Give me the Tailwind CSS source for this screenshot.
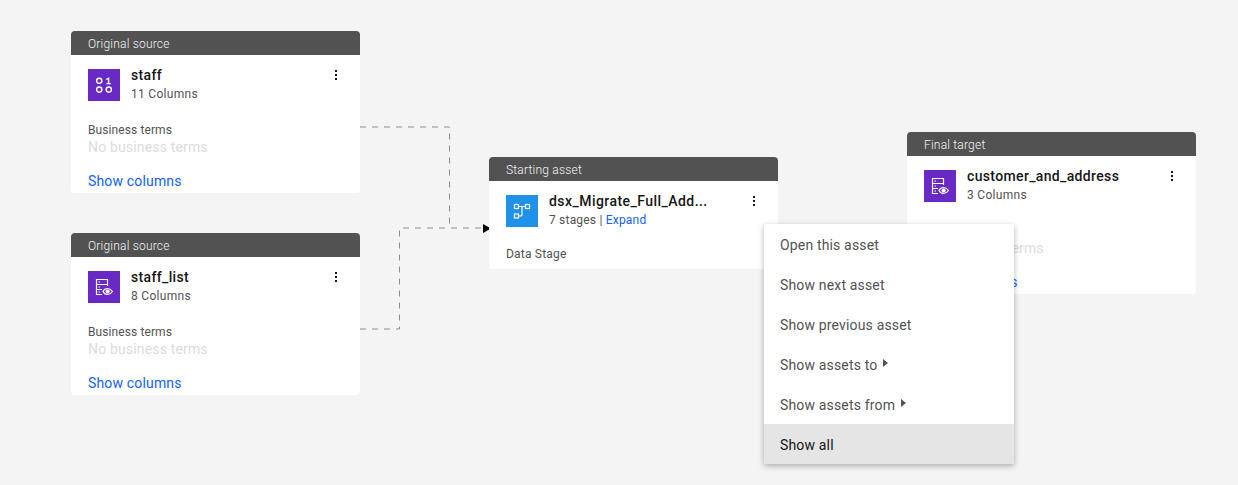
<!DOCTYPE html>
<html lang="en">
<head>
  <meta charset="UTF-8" />
  <title>Lineage</title>
  <script src="https://cdn.jsdelivr.net/npm/@tailwindcss/browser@4"></script>
</head>
<body class="bg-[#f4f4f4] font-['Roboto',sans-serif] overflow-hidden">
<div class="relative w-[1238px] h-[485px] overflow-hidden">

  <!-- Edges -->
  <svg class="absolute left-0 top-0" width="1238" height="485" fill="none">
    <path d="M360 127H449.5V228" stroke="#8d8d8d" stroke-dasharray="6 6"/>
    <path d="M360 329H399.5V228H484" stroke="#8d8d8d" stroke-dasharray="6 6"/>
    <path d="M483 224L491 228.5L483 233Z" fill="#000"/>
  </svg>

  <!-- staff -->
  <div class="absolute left-[71px] top-[31px] w-[289px] h-[162px] bg-white rounded-[4px] overflow-hidden">
    <div class="h-6 bg-[#525252] text-[#f4f4f4] text-[12px] tracking-[0.2px] leading-[26px] pl-[17px] font-light">Original source</div>
    <div class="flex pl-[17px] pt-[14px]">
      <div class="w-8 h-8 bg-[#6929c4] flex items-center justify-center">
        <svg width="20" height="20" viewBox="0 0 20 20" fill="none" stroke="#fff" stroke-width="1.4">
          <circle cx="5.2" cy="5.8" r="2.6"/><path d="M12.2 4.4L14.6 3.4V8.6M12.4 8.6H16.8"/>
          <circle cx="5.2" cy="14.6" r="2.6"/><circle cx="14.8" cy="14.6" r="2.6"/>
        </svg>
      </div>
      <div class="ml-[11px] flex-1">
        <div class="text-[14px] font-medium leading-[14px] mt-[-1px] tracking-[0.35px] text-[#161616]">staff</div>
        <div class="text-[12px] leading-4 mt-[4px] text-[#525252] tracking-[0.3px]">11 Columns</div>
      </div>
      <svg class="mr-[16px] mt-[-2px]" width="16" height="16" viewBox="0 0 16 16" fill="#161616"><rect x="7" y="3" width="2" height="2"/><rect x="7" y="7" width="2" height="2"/><rect x="7" y="11" width="2" height="2"/></svg>
    </div>
    <div class="pl-[17px] mt-[20px]">
      <div class="text-[12px] leading-4 text-[#525252] tracking-[0.1px]">Business terms</div>
      <div class="text-[14px] leading-[18px] text-[#dcdcdc] tracking-[0.16px]">No business terms</div>
      <div class="text-[14px] leading-[18px] text-[#0f62fe] tracking-[0.16px] mt-[16px]">Show columns</div>
    </div>
  </div>

  <!-- staff_list -->
  <div class="absolute left-[71px] top-[233px] w-[289px] h-[162px] bg-white rounded-[4px] overflow-hidden">
    <div class="h-6 bg-[#525252] text-[#f4f4f4] text-[12px] tracking-[0.2px] leading-[26px] pl-[17px] font-light">Original source</div>
    <div class="flex pl-[17px] pt-[14px]">
      <div class="w-8 h-8 bg-[#6929c4] flex items-center justify-center">
        <svg width="20" height="20" viewBox="0 0 20 20" fill="none" stroke="#fff" stroke-width="1.2">
          <path d="M8 17.5H2.5V2.5H13.5V9M2.5 7.5H13.5M2.5 12.5H8"/>
          <path d="M4.5 5H6M4.5 10H6M4.5 15H6"/>
          <path d="M9 14.5C10 12.5 11.6 11.5 13.5 11.5C15.4 11.5 17 12.5 18.5 14.5C17 16.5 15.4 17.5 13.5 17.5C11.6 17.5 10 16.5 9 14.5Z"/>
          <circle cx="13.6" cy="14.5" r="1.5" fill="#fff"/>
        </svg>
      </div>
      <div class="ml-[11px] flex-1">
        <div class="text-[14px] font-medium leading-[14px] mt-[-1px] tracking-[0.35px] text-[#161616]">staff_list</div>
        <div class="text-[12px] leading-4 mt-[4px] text-[#525252] tracking-[0.3px]">8 Columns</div>
      </div>
      <svg class="mr-[16px] mt-[-2px]" width="16" height="16" viewBox="0 0 16 16" fill="#161616"><rect x="7" y="3" width="2" height="2"/><rect x="7" y="7" width="2" height="2"/><rect x="7" y="11" width="2" height="2"/></svg>
    </div>
    <div class="pl-[17px] mt-[20px]">
      <div class="text-[12px] leading-4 text-[#525252] tracking-[0.1px]">Business terms</div>
      <div class="text-[14px] leading-[18px] text-[#dcdcdc] tracking-[0.16px]">No business terms</div>
      <div class="text-[14px] leading-[18px] text-[#0f62fe] tracking-[0.16px] mt-[16px]">Show columns</div>
    </div>
  </div>

  <!-- starting asset -->
  <div class="absolute left-[489px] top-[157px] w-[289px] h-[112px] bg-white rounded-[4px] overflow-hidden">
    <div class="h-6 bg-[#525252] text-[#f4f4f4] text-[12px] tracking-[0.2px] leading-[26px] pl-[17px] font-light">Starting asset</div>
    <div class="flex pl-[17px] pt-[14px]">
      <div class="w-8 h-8 bg-[#1f91e8] flex items-center justify-center">
        <svg width="20" height="20" viewBox="0 0 20 20" fill="none" stroke="#fff" stroke-width="1.2">
          <rect x="2.5" y="3.5" width="4" height="4"/><rect x="13.5" y="3.5" width="4" height="4"/><rect x="2.5" y="13" width="4" height="4"/>
          <path d="M6.5 5.5H13.5M10 5.5V13C10 14.2 9.4 15 8.2 15H6.5"/>
        </svg>
      </div>
      <div class="ml-[11px] flex-1">
        <div class="text-[14px] font-medium leading-[14px] mt-[-1px] tracking-[0.45px] text-[#161616]">dsx_Migrate_Full_Add...</div>
        <div class="text-[12px] leading-4 mt-[4px] text-[#525252] tracking-[0.2px]">7 stages | <span class="text-[#0f62fe]">Expand</span></div>
      </div>
      <svg class="mr-[16px] mt-[-2px]" width="16" height="16" viewBox="0 0 16 16" fill="#161616"><rect x="7" y="3" width="2" height="2"/><rect x="7" y="7" width="2" height="2"/><rect x="7" y="11" width="2" height="2"/></svg>
    </div>
    <div class="pl-[17px] mt-[18px] text-[12px] leading-4 text-[#525252] tracking-[0.2px]">Data Stage</div>
  </div>

  <!-- final target -->
  <div class="absolute left-[907px] top-[132px] w-[289px] h-[162px] bg-white rounded-[4px] overflow-hidden">
    <div class="h-6 bg-[#525252] text-[#f4f4f4] text-[12px] tracking-[0.2px] leading-[26px] pl-[17px] font-light">Final target</div>
    <div class="flex pl-[17px] pt-[14px]">
      <div class="w-8 h-8 bg-[#6929c4] flex items-center justify-center">
        <svg width="20" height="20" viewBox="0 0 20 20" fill="none" stroke="#fff" stroke-width="1.2">
          <path d="M8 17.5H2.5V2.5H13.5V9M2.5 7.5H13.5M2.5 12.5H8"/>
          <path d="M4.5 5H6M4.5 10H6M4.5 15H6"/>
          <path d="M9 14.5C10 12.5 11.6 11.5 13.5 11.5C15.4 11.5 17 12.5 18.5 14.5C17 16.5 15.4 17.5 13.5 17.5C11.6 17.5 10 16.5 9 14.5Z"/>
          <circle cx="13.6" cy="14.5" r="1.5" fill="#fff"/>
        </svg>
      </div>
      <div class="ml-[11px] flex-1">
        <div class="text-[14px] font-medium leading-[14px] mt-[-1px] tracking-[0.35px] text-[#161616]">customer_and_address</div>
        <div class="text-[12px] leading-4 mt-[4px] text-[#525252] tracking-[0.3px]">3 Columns</div>
      </div>
      <svg class="mr-[16px] mt-[-2px]" width="16" height="16" viewBox="0 0 16 16" fill="#161616"><rect x="7" y="3" width="2" height="2"/><rect x="7" y="7" width="2" height="2"/><rect x="7" y="11" width="2" height="2"/></svg>
    </div>
    <div class="pl-[17px] mt-[20px]">
      <div class="text-[12px] leading-4 text-[#525252] tracking-[0.1px]">Business terms</div>
      <div class="text-[14px] leading-[18px] text-[#dcdcdc] tracking-[0.16px]">No business terms</div>
      <div class="text-[14px] leading-[18px] text-[#0f62fe] tracking-[0.16px] mt-[16px]">Show columns</div>
    </div>
  </div>

  <!-- Context menu -->
  <ul class="absolute left-[764px] top-[224px] w-[250px] bg-white shadow-[0_2px_6px_rgba(0,0,0,0.3)] text-[14px] text-[#525252] tracking-[0.16px]">
    <li class="h-10 flex items-center pl-4 pt-[2px]">Open this asset</li>
    <li class="h-10 flex items-center pl-4 pt-[2px]">Show next asset</li>
    <li class="h-10 flex items-center pl-4 pt-[2px]">Show previous asset</li>
    <li class="h-10 flex items-center pl-4 pt-[2px]">Show assets to
      <svg class="ml-[6px] mt-[-4px]" width="5" height="8" viewBox="0 0 5 8" fill="#525252"><path d="M0 0L5 4L0 8Z"/></svg>
    </li>
    <li class="h-10 flex items-center pl-4 pt-[2px]">Show assets from
      <svg class="ml-[6px] mt-[-4px]" width="5" height="8" viewBox="0 0 5 8" fill="#525252"><path d="M0 0L5 4L0 8Z"/></svg>
    </li>
    <li class="h-10 flex items-center pl-4 pt-[2px] bg-[#e5e5e5] text-[#161616]">Show all</li>
  </ul>
</div>
</body>
</html>
